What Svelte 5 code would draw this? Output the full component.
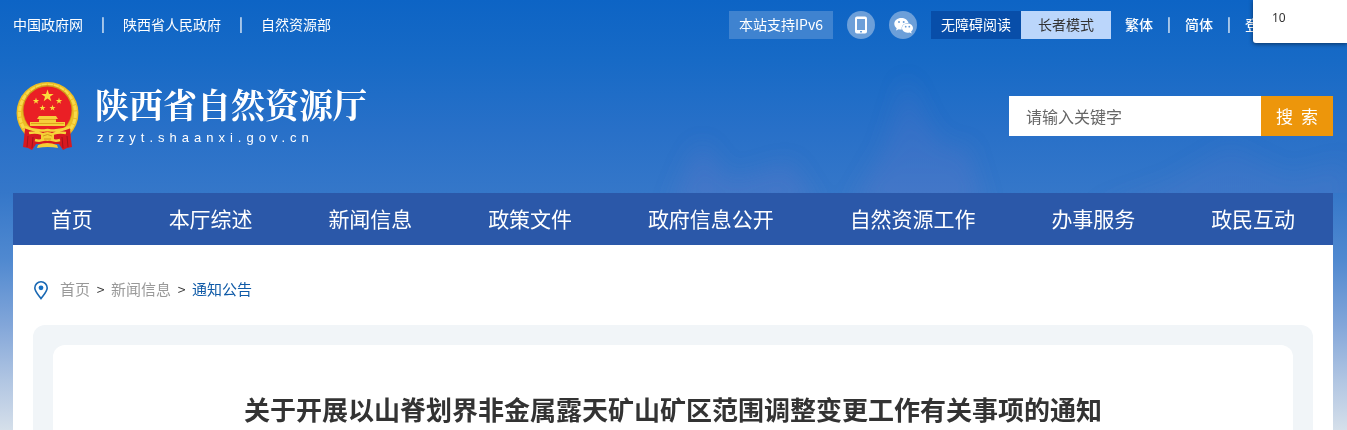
<script>
  const siteLinks = ['中国政府网', '陕西省人民政府', '自然资源部'];
  const navItems = ['首页', '本厅综述', '新闻信息', '政策文件', '政府信息公开', '自然资源工作', '办事服务', '政民互动'];
  const languages = ['繁体', '简体', '登录'];
  const star = (cx, cy, r) =>
    Array.from({ length: 10 }, (_, i) => {
      const a = (Math.PI / 5) * i - Math.PI / 2;
      const d = i % 2 ? r * 0.4 : r;
      return `${(cx + d * Math.cos(a)).toFixed(2)},${(cy + d * Math.sin(a)).toFixed(2)}`;
    }).join(' ');
  const stars = [[31.5, 15, 6.5], [20, 20, 3.4], [43, 20, 3.4], [26.5, 27, 3.2], [36.5, 27, 3.2]];
  let keyword = $state('');
</script>

<div class="page">
  <svg class="scenery" viewBox="0 0 1347 193" preserveAspectRatio="none" aria-hidden="true">
    <defs>
      <filter id="haze" x="-20%" y="-20%" width="140%" height="140%"><feGaussianBlur stdDeviation="11" /></filter>
      <linearGradient id="peak" gradientUnits="userSpaceOnUse" x1="0" y1="80" x2="0" y2="193">
        <stop offset="0" stop-color="#7d78c4" stop-opacity=".12" />
        <stop offset="1" stop-color="#7d78c4" stop-opacity=".2" />
      </linearGradient>
    </defs>
    <g filter="url(#haze)" fill="url(#peak)">
      <path d="M850 210 885 148 906 76 928 125 948 150 966 144 985 210z" />
      <path d="M670 210 690 160 702 142 730 180 790 162 820 210z" />
      <path d="M1090 210 1170 182 1230 146 1290 176 1347 160V210z" opacity=".6" />
    </g>
  </svg>

  <header>
    <div class="topbar">
      <nav class="links" aria-label="相关网站">
        {#each siteLinks as link, i}
          {#if i}<span class="bar">|</span>{/if}
          <a href="#top">{link}</a>
        {/each}
      </nav>
      <div class="tools">
        <a class="tag ipv6" href="#ipv6">本站支持IPv6</a>
        <a class="round" href="#mobile" aria-label="手机版">
          <svg width="28" height="28" viewBox="0 0 28 28">
            <path fill="#fff" fill-rule="evenodd" d="M10 5.500h8a2 2 0 0 1 2 2v13a2 2 0 0 1-2 2h-8a2 2 0 0 1-2-2v-13a2 2 0 0 1 2-2zM10 8v11h8V8zM13 20v1.500h2V20z" />
          </svg>
        </a>
        <a class="round" href="#wechat" aria-label="微信">
          <svg width="28" height="28" viewBox="0 0 28 28">
            <path fill="#fff" d="M12.3 7C8.3 7 5.3 9.6 5.3 12.8c0 1.8.9 3.3 2.4 4.4l-.7 2.4 2.7-1.4c.9.3 1.7.4 2.7.4h.5a5.4 5.4 0 0 1-.2-1.4c0-3 2.8-5.3 6.3-5.3h.5C18.7 9 15.8 7 12.3 7z" />
            <path fill="#fff" d="M18.5 12.5c-3.2 0-5.5 2.1-5.5 4.6s2.3 4.6 5.5 4.6c.7 0 1.4-.1 2-.3l2.2 1.2-.6-2c1.2-.9 1.9-2.1 1.9-3.5 0-2.5-2.5-4.6-5.5-4.6z" />
            <g fill="#6c9fd9"><circle cx="10" cy="11" r="1" /><circle cx="14.7" cy="11" r="1" /><circle cx="16.7" cy="15.7" r=".9" /><circle cx="20.3" cy="15.7" r=".9" /></g>
          </svg>
        </a>
        <div class="modes">
          <a class="tag access" href="#access">无障碍阅读</a>
          <a class="tag elder" href="#elder">长者模式</a>
        </div>
        <div class="langs">
          {#each languages as lang, i}
            {#if i}<span class="bar">|</span>{/if}
            <a href="#lang">{lang}</a>
          {/each}
        </div>
      </div>
    </div>

    <div class="masthead">
      <a class="brand" href="#home">
        <svg width="63" height="70" viewBox="0 0 63 70" aria-hidden="true">
          <circle cx="31.5" cy="32" r="31" fill="#edbd24" />
          <circle cx="31.5" cy="32" r="28" fill="none" stroke="#f8da4b" stroke-width="3" stroke-dasharray="5 1" />
          <circle cx="31.5" cy="29" r="25" fill="#d19a18" />
          <circle cx="31.5" cy="29.5" r="24" fill="#ea1f25" />
          {#each stars as [x, y, r]}<polygon points={star(x, y, r)} fill="#fbdc3c" />{/each}
          <path fill="#f6d03a" d="M23 35h17l2 3h-2v3h9v4H14v-4h9v-3h-2z" />
          <path fill="#e0a21c" d="M15 42h33v1H15zM23 38h17v1H23z" />
          <path fill="#d71920" d="M9 47q9 0 22.5 4Q46 47 54 47l1 11 1 8-5 1-4 2-4-6H20l-4 6-4-2-5-1 1-8z" />
          <path fill="none" stroke="#a3141b" stroke-width="1" d="M12 55l-1 11M17 56l-1 11M51 55l1 11M46 56l1 11" />
          <path fill="none" stroke="#f7d53c" stroke-width="2.5" d="M9 46q11 5 22.5 3Q43 51 54 46M13 52q11-2 18.5 4Q39 50 50 52M19 59q6 2 12.5-2Q38 61 44 59" />
          <path fill="#f5cf35" d="M25 53q6.5-4 13 0v5q-6.5 4-13 0zM22 64q9-4 19 0l1 3q-10-2-21 0z" />
          <path fill="none" stroke="#d5991b" d="M27 55q4.5-3 9 0M28 58h7" />
        </svg>
        <span class="names">
          <span class="name">陕西省自然资源厅</span>
          <span class="domain">zrzyt.shaanxi.gov.cn</span>
        </span>
      </a>
      <form class="search" onsubmit={(e) => e.preventDefault()}>
        <input type="text" bind:value={keyword} placeholder="请输入关键字" aria-label="请输入关键字" />
        <button type="submit">搜 索</button>
      </form>
    </div>

    <nav class="mainnav" aria-label="主导航">
      {#each navItems as item}<a href="#nav">{item}</a>{/each}
    </nav>
  </header>

  <main>
    <nav class="crumbs" aria-label="当前位置">
      <svg width="16" height="20" viewBox="0 0 16 20" aria-hidden="true">
        <path d="M8 18.5C5.5 15 1.8 11.5 1.8 8a6.2 6.2 0 0 1 12.4 0C14.2 11.5 10.5 15 8 18.5z" fill="none" stroke="#1968b3" stroke-width="1.6" />
        <circle cx="8" cy="7.8" r="2.4" fill="#1670c4" />
      </svg>
      <a href="#home">首页</a><span>&gt;</span><a href="#news">新闻信息</a><span>&gt;</span><a class="current" href="#notice">通知公告</a>
    </nav>
    <div class="panel">
      <article>
        <h1>关于开展以山脊划界非金属露天矿山矿区范围调整变更工作有关事项的通知</h1>
      </article>
    </div>
  </main>

  <div class="popup">10</div>
</div>

<style>
  :global(body) {
    margin: 0;
  }
  .page {
    position: relative;
    box-sizing: border-box;
    min-height: 100vh;
    display: flex;
    flex-direction: column;
    padding: 0 14px 0 13px;
    overflow: hidden;
    background: linear-gradient(#0d64c5 0, #176ac6 60px, #2870c8 130px, #3577c9 193px, #5089d0 260px, #82a6d9 325px, #b0c5e2 380px, #d5dfea 430px);
    font: 14px/26px "Noto Sans CJK SC", sans-serif;
    color: #fff;
  }
  .scenery {
    position: absolute;
    left: 0;
    top: 0;
    width: 100%;
    height: 193px;
  }
  a {
    color: inherit;
    text-decoration: none;
    white-space: nowrap;
  }
  header {
    position: relative;
  }
  .topbar {
    display: flex;
    justify-content: space-between;
    padding-top: 11px;
  }
  .links,
  .langs,
  .modes,
  .tools {
    display: flex;
  }
  .bar {
    width: 40px;
    text-align: center;
    line-height: 24px;
    font-weight: 500;
  }
  .tools {
    gap: 14px;
    height: 28px;
    margin-right: 60px;
  }
  .tag {
    box-sizing: border-box;
    width: 90px;
    text-align: center;
  }
  .ipv6 {
    width: 104px;
    background: #3f83d0;
  }
  .access {
    background: #084ea9;
  }
  .elder {
    background: #bbd6fb;
    color: #333;
  }
  .round {
    width: 28px;
    height: 28px;
    border-radius: 50%;
    background: #6c9fd9;
  }
  .round svg {
    display: block;
  }
  .langs {
    font-weight: 500;
  }
  .langs .bar {
    width: 32px;
  }
  .masthead {
    display: flex;
    justify-content: space-between;
    align-items: center;
    height: 154px;
  }
  .brand {
    display: flex;
    align-items: center;
    gap: 16px;
    margin-left: 3px;
  }
  .names {
    display: flex;
    flex-direction: column;
  }
  .name {
    padding-bottom: 4px;
    font: bold 34px/40px "Noto Serif CJK SC", "Noto Sans CJK SC", serif;
  }
  .domain {
    padding-left: 2px;
    font: 13px/20px "Liberation Sans", sans-serif;
    letter-spacing: 5px;
  }
  .search {
    display: flex;
    width: 324px;
    height: 40px;
  }
  .search input {
    flex: 1;
    min-width: 0;
    box-sizing: border-box;
    border: 0;
    border-radius: 0;
    padding: 0 17px;
    background: #fff;
    color: #333;
    font: 16px "Noto Sans CJK SC", sans-serif;
  }
  .search input::placeholder {
    color: #666;
    opacity: 1;
  }
  .search button {
    width: 72px;
    border: 0;
    padding: 0 0 2px;
    background: #ed960b;
    color: #fff;
    font: 17px "Noto Sans CJK SC", sans-serif;
    word-spacing: 4px;
  }
  .mainnav {
    display: flex;
    justify-content: space-around;
    padding-bottom: 2px;
    background: #2b58a9;
    font-size: 21px;
    line-height: 50px;
  }
  main {
    position: relative;
    flex: 1;
    display: flex;
    flex-direction: column;
    padding: 30px 20px 0;
    background: #fff;
    color: #333;
  }
  .crumbs {
    display: flex;
    align-items: center;
    height: 28px;
    color: #999;
    font-size: 15px;
  }
  .crumbs svg {
    margin: 2px 11px 0 0;
  }
  .crumbs span {
    width: 21px;
    text-align: center;
    color: #333;
    font-size: 14px;
  }
  .crumbs .current {
    color: #0f5aa7;
  }
  .panel {
    flex: 1;
    display: flex;
    margin-top: 22px;
    padding: 20px 20px 0;
    border-radius: 12px 12px 0 0;
    background: #f1f5f8;
  }
  article {
    flex: 1;
    padding-top: 44px;
    border-radius: 12px 12px 0 0;
    background: #fff;
  }
  h1 {
    margin: 0;
    text-align: center;
    font-size: 26px;
    line-height: 40px;
    font-weight: bold;
  }
  .popup {
    position: absolute;
    right: 0;
    top: 0;
    box-sizing: border-box;
    width: 94px;
    height: 43px;
    padding-left: 19px;
    border-radius: 0 0 0 3px;
    background: #fff;
    box-shadow: 0 1px 4px rgba(0, 0, 0, 0.5);
    color: #333;
    font: 12px/36px "Noto Sans", sans-serif;
  }
</style>
